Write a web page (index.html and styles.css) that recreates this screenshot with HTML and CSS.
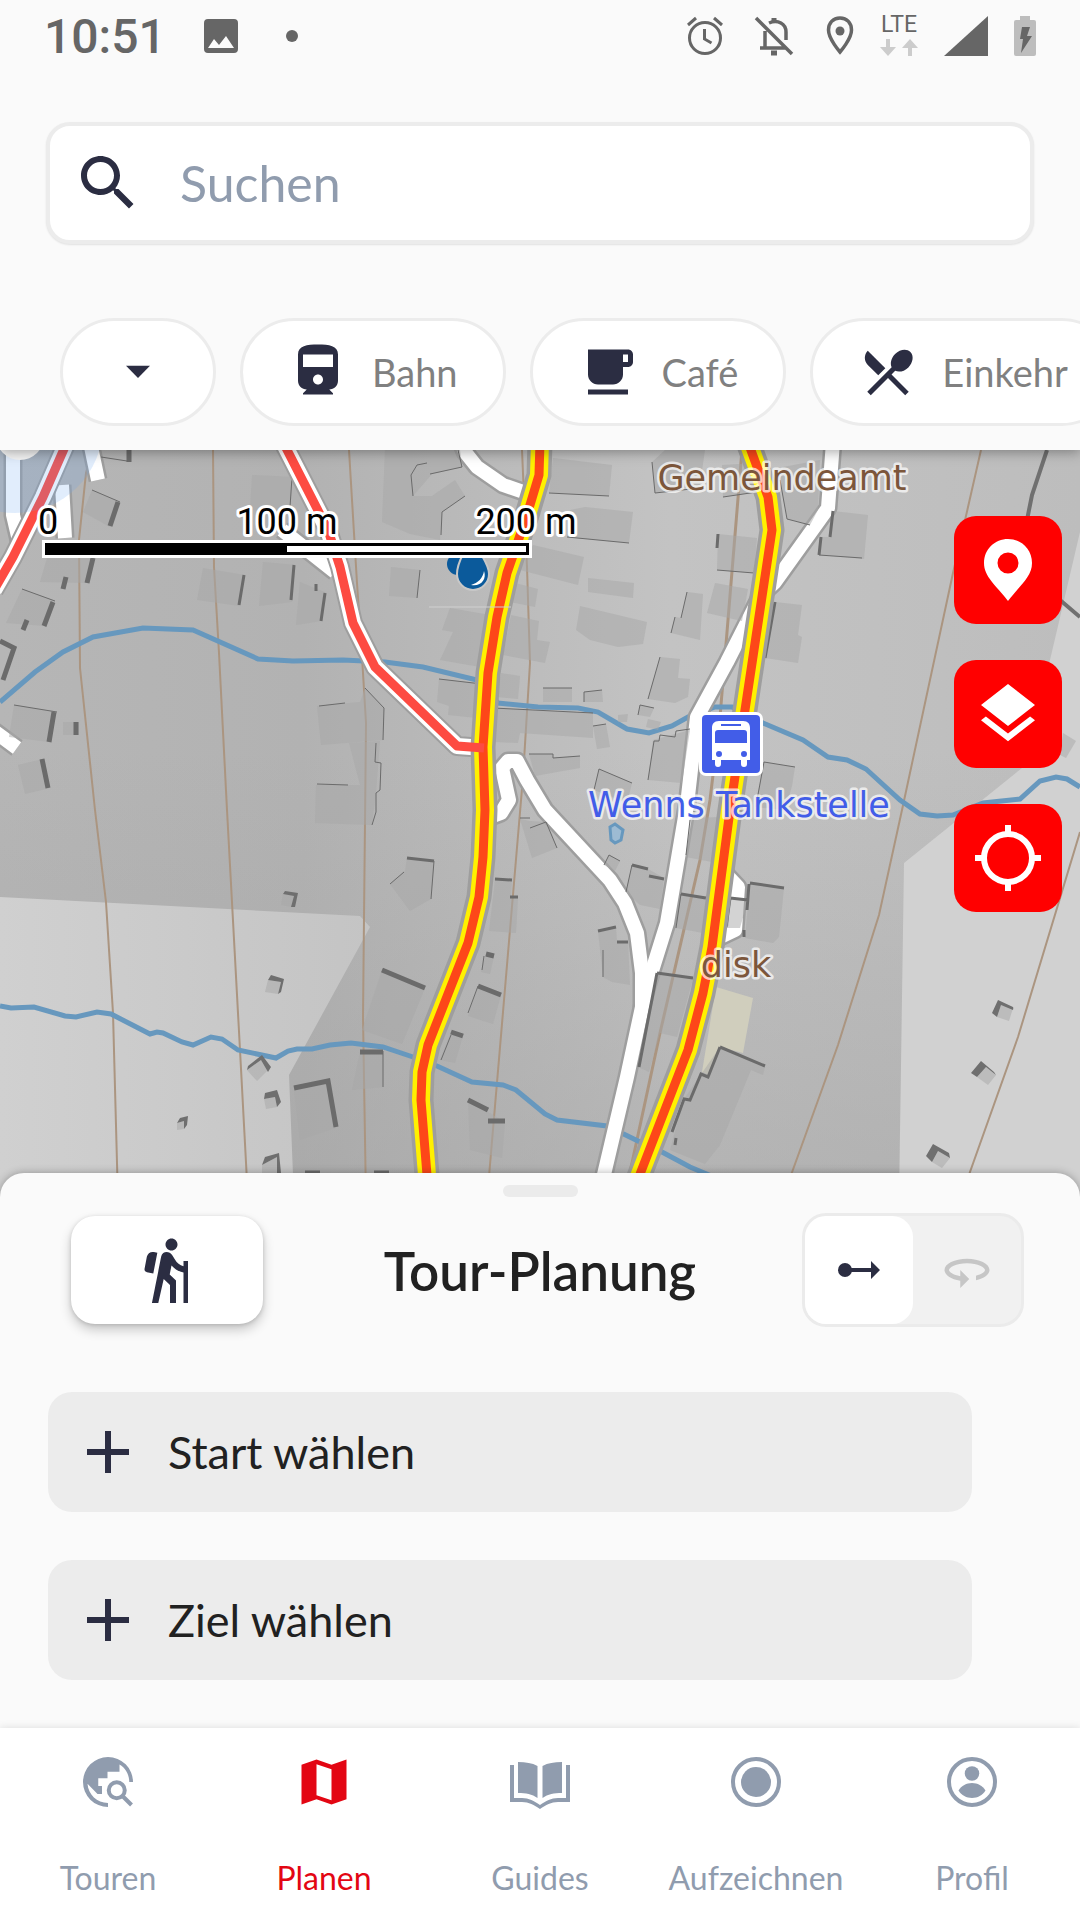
FILE: index.html
```html
<!DOCTYPE html>
<html lang="de">
<head>
    <meta charset="UTF-8">
    <meta name="viewport" content="width=device-width, initial-scale=1.0">
    <title>Tour-Planung</title>
    <link rel="stylesheet" href="styles.css">
</head>
<body>
    <header class="top">
        <div class="status-bar">
            <time class="clock">10:51</time>
            <svg class="status-photo" width="34" height="34" viewBox="0 0 34 34"><path fill-rule="evenodd" d="M4 0h26a4 4 0 0 1 4 4v26a4 4 0 0 1-4 4H4a4 4 0 0 1-4-4V4a4 4 0 0 1 4-4zM4 29h26L22 17l-7 9-5-6z"/></svg>
            <span class="status-dot"></span>
            <div class="status-icons">
                <svg width="42" height="40" viewBox="0 0 42 40" fill="none" stroke="currentColor" stroke-width="3"><circle cx="19" cy="22" r="15.5"/><path d="M18.5 13v10l7 4M2 9l8-7M36 9l-8-7"/></svg>
                <svg width="40" height="40" viewBox="0 0 40 40" fill="none" stroke="currentColor" stroke-width="3.5"><path d="M2 2l36 36M6 32h26M11 31V15M15 7c9-4 17 1 17 9v8"/><path d="M20 2v4M17 37h6" stroke-width="5"/></svg>
                <svg width="34" height="40" viewBox="-6 0 34 40" fill="none" stroke="currentColor" stroke-width="3.5"><path d="M14 2C7 2 2.500 7 2.500 14c0 9 11.500 22 11.500 22s11.500-13 11.500-22C25.500 7 21 2 14 2z"/><circle cx="14" cy="15" r="4.500" fill="currentColor" stroke="none"/></svg>
                <div class="network">
                    <span>LTE</span>
                    <svg width="38" height="17" viewBox="0 0 38 17"><path d="M6 0h4v8h6l-8 9-8-9h6zM28 17h4V9h6l-8-9-8 9h6z"/></svg>
                </div>
                <svg width="44" height="40" viewBox="0 0 44 40"><path d="M44 0v40H0z"/></svg>
                <svg width="22" height="40" viewBox="0 0 22 40"><path fill="#bdbdbd" d="M6 0h10v4h4a2 2 0 0 1 2 2v32a2 2 0 0 1-2 2H2a2 2 0 0 1-2-2V6a2 2 0 0 1 2-2h4z"/><path d="M8 11h8l-3 9h5L7 37l2-14H6z"/></svg>
            </div>
        </div>

        <form class="search" role="search">
            <svg width="72" height="72" viewBox="0 0 24 24"><path d="M15.500 14h-.79l-.28-.27C15.410 12.590 16 11.110 16 9.500 16 5.910 13.090 3 9.500 3S3 5.910 3 9.500 5.910 16 9.500 16c1.610 0 3.090-.59 4.230-1.570l.27.28v.79l5 4.990L20.490 19l-4.990-5zm-6 0C7.010 14 5 11.990 5 9.500S7.010 5 9.500 5 14 7.010 14 9.500 11.990 14 9.500 14z"/></svg>
            <input type="search" placeholder="Suchen" aria-label="Suchen">
        </form>

        <div class="chips">
            <button class="chip chip-more" aria-label="Kategorien"><svg width="60" height="60" viewBox="0 0 24 24"><path d="M7.200 9.500h9.600L12 14.400z"/></svg></button>
            <button class="chip"><svg width="60" height="60" viewBox="0 0 24 24"><path d="M4 15.500C4 17.430 5.570 19 7.500 19L6 20.500v.5h12v-.5L16.500 19c1.930 0 3.500-1.570 3.500-3.500V5c0-3.500-3.580-4-8-4s-8 .5-8 4v10.500zm8 1.500c-1.100 0-2-.9-2-2s.9-2 2-2 2 .9 2 2-.9 2-2 2zm6-7H6V5h12v5z"/></svg>Bahn</button>
            <button class="chip"><svg width="60" height="60" viewBox="0 0 24 24"><path d="M20 3H4v10c0 2.210 1.790 4 4 4h6c2.210 0 4-1.790 4-4v-3h2c1.110 0 2-.9 2-2V5c0-1.110-.89-2-2-2zm0 5h-2V5h2v3zM4 19h16v2H4z"/></svg>Café</button>
            <button class="chip"><svg width="60" height="60" viewBox="0 0 24 24"><path d="M8.100 13.340l2.830-2.830L3.910 3.500c-1.560 1.560-1.560 4.090 0 5.660l4.190 4.180zm6.780-1.810c1.530.71 3.680.21 5.270-1.380 1.910-1.910 2.280-4.650.81-6.120-1.460-1.460-4.200-1.100-6.120.81-1.590 1.590-2.090 3.740-1.380 5.270L3.700 19.870l1.410 1.410L12 14.410l6.880 6.880 1.410-1.410L13.410 13l1.470-1.470z"/></svg>Einkehr</button>
        </div>
    </header>

    <main class="map">
        <svg class="map-canvas" viewBox="0 0 1080 750" preserveAspectRatio="xMidYMin slice" role="img" aria-label="Karte von Wenns">
            <defs>
                <linearGradient id="ground" x1="0" y1="0" x2="1" y2="0">
                    <stop offset="0" stop-color="#b6b6b6"/>
                    <stop offset=".28" stop-color="#b2b2b2"/>
                    <stop offset=".62" stop-color="#c3c3c3"/>
                    <stop offset="1" stop-color="#bdbdbd"/>
                </linearGradient>
                <linearGradient id="shade" x1="0" y1="0" x2="0" y2="1">
                    <stop offset=".4" stop-color="#a0a0a0" stop-opacity="0"/>
                    <stop offset="1" stop-color="#a0a0a0" stop-opacity=".45"/>
                </linearGradient>
                <linearGradient id="slope" x1="0" y1="0" x2="1" y2="0">
                    <stop offset="0" stop-color="#d0d0d0"/>
                    <stop offset="1" stop-color="#c4c4c4"/>
                </linearGradient>
            </defs>

            <!-- hill shading -->
            <path fill="url(#ground)" d="M0 0h1080v750H0z"/>
            <path fill="url(#shade)" d="M0 0h1080v750H0z"/>
            <path fill="url(#slope)" d="M0 447L360 466L370 477L289 625L294 750H0z"/>
            <path fill="#d1d1d1" d="M1080 82L1050 210L1022 318L904 413L899 750H1080z"/>
            <path fill="#d0cebd" d="M716 537L753 548L743 603L720 597L709 625L702 622z"/>

            <!-- contour lines -->
            <g class="contour">
                <path d="M92 0L86 23L79 90L80 218L95 360L106 452L113 563L118 750"/>
                <path d="M213 0L214 117L219 203L227 360L240 600L248 750"/>
                <path d="M349 0L357 133L363 223L366 273L363 567L366 750"/>
                <path d="M522 0L527 117L530 213L523 327L487 750"/>
                <path d="M742 0L720 267L710 350L700 410L660 583L624 750" stroke-width="3"/>
                <path d="M981 0L953 123L902 360L879 465L838 595L782 750"/>
                <path d="M1080 382L1018 587L960 750"/>
            </g>

            <!-- streams -->
            <g class="stream">
                <path d="M0 252L35 222L63 202L93 187L143 178L193 180L258 209L293 211L343 210L385 212L423 217L477 230L498 253L538 257L578 258L598 262L627 279L649 283L672 276L688 267L715 257L732 257L763 273L803 290L828 307L847 310L866 319L900 350L920 364L937 366L953 365L983 353L1020 349L1040 331L1056 327L1067 329L1080 337"/>
                <path d="M0 556L11 558L34 557L65 566L76 567L97 562L111 564L150 584L157 582L163 583L182 592L193 595L211 587L222 589L238 600L276 608L288 601L297 599L312 599L330 595L351 593L383 597L413 607L437 616L472 632L503 635L516 640L545 664L557 670L607 676L638 691L662 702L690 717L740 738"/>
                <path d="M610 377L615 374L623 380L621 390L615 393L611 390z" fill="#9dbbd3" stroke-width="3"/>
            </g>

            <!-- small roads -->
            <g class="road road-case">
                <path d="M461 -8L465 2L477 17L503 35L535 46"/>
                <path d="M833 -8L828 58L775 132L761 145L727 212L697 267L687 355L667 473L647 537L642 557L627 627L598 750"/>
                <path d="M493 366L501 363L509 350L502 318L508 311H517L527 330L545 360L610 430L625 453L637 483L642 523L642 557"/>
                <path d="M13 -8V65L20 95M90 -8L98 30M62 35L65 88M282 80L335 122M-6 281L17 298M722 420L738 437L735 480L712 491"/>
            </g>
            <g class="road road-white">
                <path d="M461 -8L465 2L477 17L503 35L535 46"/>
                <path d="M833 -8L828 58L775 132L761 145L727 212L697 267L687 355L667 473L647 537L642 557L627 627L598 750"/>
                <path d="M493 366L501 363L509 350L502 318L508 311H517L527 330L545 360L610 430L625 453L637 483L642 523L642 557"/>
                <path d="M13 -8V65L20 95M90 -8L98 30M62 35L65 88M282 80L335 122M-6 281L17 298M722 420L738 437L735 480L712 491"/>
            </g>
            <path fill="none" stroke="#707070" stroke-width="4" d="M1047 0L1032 45L1027 70M1060 150L1080 167"/>

            <!-- buildings -->
            <path class="house" d="M92 40L120 52L110 77L83 62zM47 108L95 108L87 133L40 132zM22 139L55 151L45 176L6 173zM14 255L57 262L49 292L9 287zM63 272H79V285H63zM18 315L43 309L50 338L25 344zM252 25L293 27L290 60L250 60zM203 118L245 125L239 156L197 150zM263 112L295 115L292 152L259 156zM300 132L327 143L321 171L296 175zM317 256L360 252L365 238L384 258L383 290L321 295zM316 335H360L349 293L380 291L376 343L372 375L315 373z"/>
            <path class="house" d="M385 0H460L462 17L432 24L413 46H432L455 30L465 46L442 62L440 90L410 84L382 72zM391 117L420 120L417 148L389 146zM450 158L490 165L480 217L440 210L453 182L442 180zM439 229L482 234L477 268L448 265L449 256L437 252zM553 8L612 15L609 46L549 43zM585 57L633 62L629 93L567 87L570 60zM533 95L584 107L578 135L520 120zM588 128L634 133L633 148L588 142zM580 156L647 172L643 194L618 197L590 190L576 180zM515 133L538 139L535 157L510 152zM511 165L539 171L537 190L550 192L545 213L503 205zM501 223L520 226L518 249L497 247z"/>
            <path class="house" d="M543 238H572V252H543zM584 242L602 240L603 252H584zM687 142L703 144L700 190L671 183L675 167L681 168zM660 207L680 209L678 228L690 229L688 247L675 253L648 249zM640 255L654 258L650 267L638 265zM648 269L661 272L658 280L646 277zM618 265L628 264L627 272H618zM493 258L593 263V288L520 283L518 293L495 292zM593 276L606 274L610 297L597 299zM529 304H553V308L580 306V318L557 322L535 326zM599 319L632 333L627 353L594 340zM653 290L690 280L682 333L648 330zM652 12L665 0H705L700 35L655 43zM722 15L758 13L757 42L723 47z"/>
            <path class="house" d="M780 30L787 69L810 75L818 60L820 10L783 17zM833 61L868 65L864 109L819 105L820 87H830zM718 84L757 88L754 123L717 120zM715 133L748 139L742 171L707 163zM775 152L802 155L798 185L802 187L798 213L765 208zM764 312L795 317L792 336L785 360L755 357zM750 433L784 438L779 487L773 493L745 488zM730 448L748 450L740 478H726zM520 369L530 371L547 372L557 398L532 408zM407 408L434 411L431 449L410 461L390 434L405 421zM495 430L512 431L511 447L518 448L516 483L489 481zM486 504L494 506L490 524L481 522zM478 536L501 545L493 574L468 566zM451 582L463 586L455 613L440 610z"/>
            <path class="house" d="M382 520L425 538L402 594L362 580zM360 602H383V637L352 640zM468 651L488 662L505 672L502 708L470 700zM609 405L620 411L615 421L604 415zM632 415L648 419L664 428L660 459L640 455L626 442zM681 444L706 448L703 483L676 478zM690 368L720 367L712 412L686 407zM598 481L616 477L617 492H628L630 535L612 532L603 527zM657 523L693 529L677 587L660 583L649 622L638 617zM720 597L765 616L763 625L751 620L720 695L705 714L670 700L684 649zM294 639L328 632L336 678L300 690z"/>
            <path class="house" d="M283 444L294 446L291 457L281 455zM268 530L281 532L278 544L265 542zM247 620L261 610L268 620L257 631zM264 649L275 647L277 657L266 659zM177 673L184 671V679L177 680zM262 715L277 707V723H262zM1001 555L1013 558L1009 571L997 567zM986 617L996 625L988 635L977 627zM938 701L950 708L942 718L932 712zM1063 283L1076 291L1066 308L1060 305z"/>
            <path class="wall" d="M92 40L120 52M101 7L127 11M22 139L55 151M14 255L57 262M292 27L290 57M317 334L348 335M319 256L345 253M365 238L384 258L383 290M376 293L375 312L381 313L380 340L376 343V362L372 375M458 0L462 17L430 24M427 13L417 15L411 25L413 46M465 46L442 62L441 85M420 120L417 148M439 229L482 234M549 43L609 46M567 87L629 93M543 238H572M584 252V242L602 240M687 142L681 168M675 167L671 183M660 207L648 249M638 265L640 255L654 258M493 258L593 263M529 304H553V308L580 306M594 340L599 319L632 333M690 279L676 281L675 287L660 285L659 291H654L648 330M652 12L655 43L700 38M723 47L757 42M780 30L787 69L810 75M819 105L862 108M717 120L754 123M795 317L764 312L757 350M530 378L546 372L557 398M434 411L431 449M390 434L404 422M604 415L609 405L620 411M632 415L626 442M681 444L676 478M690 370L686 405M383 601V637M603 500V527M484 506L482 520M478 536L468 563M451 585L441 610M593 276L606 274M520 368H530"/>
            <path class="wall wall-mid" d="M244 125L239 155M294 115L291 150M325 143L321 171M316 134V141M833 61L830 87M821 87L819 105M775 152L765 208M718 84L717 98M750 433L784 438M749 434L747 460M744 480V487M730 448L748 450M730 448L726 477M407 408L434 411M495 429L512 430M510 447H518M632 415L648 419M649 426L664 429M681 444L706 448M598 481L616 477M617 492H628M657 523L693 528M657 523L639 617M720 597L765 616M720 597L708 627L701 624L690 650L684 649L672 682M305 722H320M374 722H389M676 688L675 695"/>
            <path class="wall wall-thick" d="M118 52L110 76M129 0V12M93 108L87 133M66 127L63 139M53 152L44 176M27 170L23 180M0 191L14 198L3 230M54 262L49 292M76 272V285M42 309L48 338M382 520L425 538M360 602H383M468 650L488 660M488 671H505M486 504L494 506M478 536L501 545M451 582L463 586M294 638L328 631L336 677"/>
            <path class="wall-fill" d="M283 444L285 441L298 443L295 457L291 457L294 446zM268 530L271 525L284 529L281 542L278 544L281 532zM247 620L248 616L262 605L271 617L268 622L261 610zM264 649L265 643L277 640L281 652L277 657L275 647zM177 673L180 668L188 666L187 675L184 679V671zM262 715L265 707L279 703L281 723H277V707zM1013 558L1014 560L1013 557L998 550L992 563L997 567L1001 555L1013 560zM996 625L994 622L981 611L971 623L977 627L986 617zM950 708L949 703L933 694L926 706L932 712L938 701z"/>

            <!-- main roads -->
            <g class="road">
                <path class="path-case" d="M67 -8L43 47L13 107L-6 140M283 -8L328 80L340 117L353 173L375 217L457 296L484 298"/>
                <path class="path-edge" d="M67 -8L43 47L13 107L-6 140M283 -8L328 80L340 117L353 173L375 217L457 296L484 298"/>
                <path class="main-case" d="M540 -8L539 25L527 65L507 123L497 167L488 223L483 297L485 360L483 407L479 447L468 493L428 595L422 622L421 650L429 750M748 -8L768 47L772 80L745 260L730 360L712 497L703 543L688 600L630 750"/>
                <path class="main-edge" d="M540 -8L539 25L527 65L507 123L497 167L488 223L483 297L485 360L483 407L479 447L468 493L428 595L422 622L421 650L429 750M748 -8L768 47L772 80L745 260L730 360L712 497L703 543L688 600L630 750"/>
                <path class="main-line" d="M540 -8L539 25L527 65L507 123L497 167L488 223L483 297L485 360L483 407L479 447L468 493L428 595L422 622L421 650L429 750M748 -8L768 47L772 80L745 260L730 360L712 497L703 543L688 600L630 750"/>
                <path class="path-line" d="M67 -8L43 47L13 107L-6 140M283 -8L328 80L340 117L353 173L375 217L457 296L484 298"/>
            </g>
            <path stroke="#d0d0d0" d="M429 157H511"/>

            <!-- own position -->
            <circle cx="15" cy="-25" r="88" fill="#6aa5ee" fill-opacity=".2"/>
            <circle cx="20" cy="-14" r="24" fill="#f5f5f5"/>

            <!-- fountain -->
            <g fill="#0b5a9b">
                <circle cx="458" cy="114" r="11"/>
                <path stroke="#c8c8c8" stroke-width="2" d="M463 104h18c4 7 8 13 8 20a16 16 0 0 1-32 0c0-8 3-14 6-20z"/>
                <path fill="#fff" d="M484 121c3 8-3 16-13 14 7-2 12-7 13-14z"/>
            </g>

            <!-- bus stop -->
            <g>
                <rect x="699" y="262" width="64" height="64" rx="7" fill="#fff"/>
                <rect x="702" y="265" width="58" height="58" rx="4" fill="#425de8"/>
                <path fill="#fff" fill-rule="evenodd" d="M719 271h24c5 0 7 3 7 7v32h-3v4a3 3 0 0 1-6 0v-4h-20v4a3 3 0 0 1-6 0v-4h-3v-32c0-4 2-7 7-7zm-1 9a3 3 0 0 0-3 3v10h32v-10a3 3 0 0 0-3-3zm1 21a3 3 0 1 0 0 6 3 3 0 0 0 0-6zm25 0a3 3 0 1 0 0 6 3 3 0 0 0 0-6z"/>
                <path stroke="#425de8" stroke-width="2" d="M721 275h20"/>
            </g>

            <g class="place">
                <text x="782" y="40">Gemeindeamt</text>
                <text x="736" y="527">disk</text>
                <text x="739" y="367" class="stop">Wenns Tankstelle</text>
            </g>

            <!-- scale -->
            <path fill="#fff" d="M42 90h490v18H42z"/>
            <path fill="#000" d="M45 93h484v12H45z"/>
            <path fill="#fff" d="M287 96h239v6H287z"/>
            <g class="scale-label">
                <text x="48" y="84">0</text>
                <text x="287" y="84">100 m</text>
                <text x="526" y="84">200 m</text>
            </g>
        </svg>

        <div class="map-actions">
            <button aria-label="Ort"><svg width="48" height="62" viewBox="0 0 48 62"><path fill-rule="evenodd" d="M24 0C11 0 0 10 0 24c0 14 12 22 24 38 12-16 24-24 24-38C48 10 37 0 24 0zm0 13.500a10.500 10.500 0 1 1 0 21 10.500 10.500 0 0 1 0-21z"/></svg></button>
            <button aria-label="Ebenen"><svg width="72" height="72" viewBox="0 0 24 24"><path d="M11.990 18.540l-7.370-5.730L3 14.070l9 7 9-7-1.630-1.270-7.380 5.740zM12 16l7.360-5.730L21 9l-9-7-9 7 1.630 1.270L12 16z"/></svg></button>
            <button aria-label="Standort"><svg width="72" height="72" viewBox="0 0 24 24" fill="none" stroke="currentColor" stroke-width="2"><circle cx="12" cy="12" r="8"/><path d="M12 1v3M12 20v3M1 12h3M20 12h3"/></svg></button>
        </div>
    </main>

    <section class="sheet">
        <div class="handle"></div>
        <div class="sheet-head">
            <button class="activity" aria-label="Wandern"><svg width="72" height="72" viewBox="0 0 24 24"><path d="M13.500 5.500c1.100 0 2-.9 2-2s-.9-2-2-2-2 .9-2 2 .9 2 2 2zM17.500 10.780c-1.230-.37-2.220-1.170-2.800-2.180l-1-1.600c-.41-.65-1.110-1-1.840-1-.78 0-1.590.5-1.780 1.440S7 23 7 23h2.100l1.800-8 2.100 2v6h2v-7.500l-2.100-2 .6-3c1 1.150 2.410 2.010 4 2.340V23H19V9h-1.500v1.780zM7.430 13.130l-2.120-.41c-.54-.11-.9-.63-.79-1.170l.76-3.930c.21-1.080 1.260-1.790 2.340-1.580l1.160.23-1.350 6.860z"/></svg></button>
            <h1>Tour-Planung</h1>
            <div class="route-mode">
                <button class="active" aria-label="Strecke" aria-pressed="true"><svg width="42" height="18" viewBox="0 0 42 18"><circle cx="7" cy="9" r="7"/><path d="M7 7h26V0l9 9-9 9v-7H7z"/></svg></button>
                <button aria-label="Rundtour" aria-pressed="false"><svg width="54" height="54" viewBox="0 0 24 24"><path d="M12 7C6.480 7 2 9.240 2 12c0 2.240 2.940 4.130 7 4.770V20l4-4-4-4v2.730c-3.150-.56-5-1.900-5-2.730 0-1.060 3.040-3 8-3s8 1.940 8 3c0 .73-1.460 1.890-4 2.530v2.050c3.530-.77 6-2.530 6-4.580 0-2.760-4.480-5-10-5z"/></svg></button>
            </div>
        </div>
        <div class="waypoints">
            <button class="waypoint"><svg width="72" height="72" viewBox="0 0 24 24"><path d="M19 13h-6v6h-2v-6H5v-2h6V5h2v6h6z"/></svg>Start wählen</button>
            <button class="waypoint"><svg width="72" height="72" viewBox="0 0 24 24"><path d="M19 13h-6v6h-2v-6H5v-2h6V5h2v6h6z"/></svg>Ziel wählen</button>
        </div>
    </section>

    <nav class="tabs">
        <a href="#touren"><svg width="60" height="60" viewBox="0 0 24 24"><path d="M12 20.400V22A10 10 0 1 1 22 12h-1.500c0-3-1.500-5.600-3.900-7v2.900h-4.800v2.600H8.100v3.100h1.500v3.200H7.800l-4-4.100c.3 4.300 3.800 7.700 8.200 7.700z"/><circle cx="15.500" cy="15.300" r="3.200" fill="none" stroke="currentColor" stroke-width="1.600"/><path fill="none" stroke="currentColor" stroke-width="1.600" d="M17.700 17.500l3.700 3.700"/></svg>Touren</a>
        <a href="#planen" class="active" aria-current="page"><svg width="60" height="60" viewBox="0 0 24 24"><path fill-rule="evenodd" d="M3 5.100L9 3l6 2.100L21 3v15.900L15 21l-6-2.100L3 21zM9 4.900v12.400l6 2V6.900z"/></svg>Planen</a>
        <a href="#guides"><svg width="60" height="60" viewBox="0 0 60 60"><path d="M8 10c8 0 14 1 19.500 4v32C22 42 16 41 8 41zM52 10c-8 0-14 1-19.500 4v32C38 42 44 41 52 41zM0 13h4v33h8c7 0 12 3 18 7 6-4 11-7 18-7h8V13h4v37H48c-7 0-12 3-18 7-6-4-11-7-18-7H0z"/></svg>Guides</a>
        <a href="#aufzeichnen"><svg width="60" height="60" viewBox="0 0 24 24"><circle cx="12" cy="12" r="9.200" fill="none" stroke="currentColor" stroke-width="1.600"/><circle cx="12" cy="12" r="6"/></svg>Aufzeichnen</a>
        <a href="#profil"><svg width="60" height="60" viewBox="0 0 24 24"><circle cx="12" cy="12" r="9.200" fill="none" stroke="currentColor" stroke-width="1.600"/><circle cx="12" cy="8.600" r="2.900"/><path d="M6.600 15.400c1.200-1.900 3.200-3 5.400-3s4.200 1.100 5.400 3c-1.200 1.900-3.200 3-5.400 3s-4.200-1.100-5.400-3z"/></svg>Profil</a>
    </nav>
</body>
</html>
```
FILE: styles.css
```css
* {
    box-sizing: border-box;
}

body {
    margin: 0;
    min-height: 100vh;
    display: flex;
    flex-direction: column;
    font-family: Lato, sans-serif;
    background: #fafafa;
    color: #212121;
    overflow-x: hidden;
}

button {
    border: none;
    padding: 0;
    font: inherit;
    color: inherit;
    cursor: pointer;
}

svg {
    display: block;
    flex: none;
    fill: currentColor;
}

svg[fill="none"] {
    fill: none;
}

/* header */
.top {
    position: relative;
    z-index: 1;
    background: #fafafa;
    padding-bottom: 24px;
    box-shadow: 0 2px 12px rgba(0, 0, 0, 0.35);
}

.status-bar {
    display: flex;
    align-items: center;
    height: 72px;
    padding: 0 44px;
    color: #666;
    font-family: Roboto, sans-serif;
}

.clock {
    font-size: 48px;
    font-weight: 500;
}

.status-photo {
    margin-left: 38px;
}

.status-dot {
    width: 12px;
    height: 12px;
    margin-left: 48px;
    border-radius: 50%;
    background: #666;
}

.status-icons {
    margin-left: auto;
    display: flex;
    align-items: center;
    gap: 26px;
}

.network {
    display: flex;
    flex-direction: column;
    align-items: center;
    gap: 5px;
    font-size: 23px;
    line-height: 18px;
}

.network svg {
    fill: #ccc;
}

.search {
    display: flex;
    align-items: center;
    gap: 36px;
    height: 122px;
    margin: 50px 46px 0;
    padding: 0 22px;
    background: #fff;
    border: 4px solid #ececec;
    border-radius: 24px;
    color: #2b2d42;
    box-shadow: 0 1px 2px rgba(0, 0, 0, 0.1);
}

.search input {
    flex: 1;
    min-width: 0;
    border: none;
    outline: none;
    padding: 0;
    background: none;
    font: inherit;
    font-size: 50px;
}

.search input::placeholder {
    color: #909cae;
}

.chips {
    display: flex;
    gap: 24px;
    margin-top: 74px;
    padding-left: 60px;
    overflow: hidden;
}

.chip {
    display: flex;
    flex: none;
    align-items: center;
    gap: 24px;
    height: 108px;
    padding: 0 45px;
    background: #fff;
    border: 3px solid #ececec;
    border-radius: 54px;
    color: #808080;
    font-size: 38px;
}

.chip svg {
    fill: #2b2d42;
}

/* map */
.map {
    position: relative;
    flex: 1;
    min-height: 560px;
}

.map-canvas {
    position: absolute;
    top: 0;
    left: 0;
    width: 100%;
    height: calc(100% + 27px);
}

.contour {
    fill: none;
    stroke: #ab9580;
    stroke-width: 2;
}

.stream {
    fill: none;
    stroke: #6798be;
    stroke-width: 5;
}

.road {
    fill: none;
    stroke-linejoin: round;
}

.road-case {
    stroke: #9e9e9e;
    stroke-width: 19;
}

.road-white {
    stroke: #fff;
    stroke-width: 14;
}

.path-case {
    stroke: #9e9e9e;
    stroke-width: 20;
}

.path-edge {
    stroke: #fff;
    stroke-width: 16;
}

.path-line {
    stroke: #fd4b42;
    stroke-width: 9;
}

.main-case {
    stroke: #9e9e9e;
    stroke-width: 25;
}

.main-edge {
    stroke: #fff000;
    stroke-width: 18;
}

.main-line {
    stroke: #fd4719;
    stroke-width: 9;
}

.house {
    fill: #a8a8a8;
    fill-opacity: 0.5;
}

.wall {
    fill: none;
    stroke: #6b6b6b;
    stroke-width: 1;
}

.wall-mid {
    stroke-width: 3;
}

.wall-thick {
    stroke-width: 5;
}

.wall-fill {
    fill: #6f6f6f;
}

.place {
    font-family: "DejaVu Sans", sans-serif;
    font-size: 35px;
    text-anchor: middle;
    fill: #7c563b;
    stroke: #fff;
    stroke-opacity: 0.7;
    stroke-width: 5;
    stroke-linejoin: round;
    paint-order: stroke;
}

.stop {
    fill: #425de8;
}

.scale-label {
    font-family: Roboto, sans-serif;
    font-size: 36px;
    text-anchor: middle;
    fill: #000;
    stroke: #fff;
    stroke-width: 6;
    stroke-linejoin: round;
    paint-order: stroke;
}

.map-actions {
    position: absolute;
    top: 66px;
    right: 18px;
    display: flex;
    flex-direction: column;
    gap: 36px;
}

.map-actions button {
    display: flex;
    align-items: center;
    justify-content: center;
    width: 108px;
    height: 108px;
    background: #f00;
    border-radius: 22px;
    color: #fff;
}

/* planning sheet */
.sheet {
    position: relative;
    background: #fafafa;
    border-radius: 24px 24px 0 0;
    padding: 12px 48px 48px;
    box-shadow: 0 0 8px rgba(0, 0, 0, 0.3);
}

.handle {
    width: 75px;
    height: 12px;
    margin: 0 auto;
    border-radius: 6px;
    background: #ebebeb;
}

.sheet-head {
    display: grid;
    grid-template-columns: 1fr auto 1fr;
    align-items: center;
    margin-top: 16px;
    padding: 0 8px;
}

.sheet-head h1 {
    margin: 0;
    font-size: 53px;
    font-weight: 600;
}

.activity {
    display: flex;
    align-items: center;
    justify-content: center;
    width: 192px;
    height: 108px;
    margin-left: 15px;
    background: #fff;
    border-radius: 24px;
    color: #2b2d42;
    box-shadow: 0 6px 12px rgba(0, 0, 0, 0.2), 0 1px 4px rgba(0, 0, 0, 0.15);
}

.route-mode {
    justify-self: end;
    display: flex;
    border: 3px solid #ebebeb;
    border-radius: 24px;
    background: #f1f1f1;
}

.route-mode button {
    display: flex;
    align-items: center;
    justify-content: center;
    width: 108px;
    height: 108px;
    border-radius: 21px;
    background: none;
    color: #c6c6c6;
}

.route-mode .active {
    background: #fff;
    color: #2b2d42;
}

.waypoints {
    display: flex;
    flex-direction: column;
    gap: 48px;
    margin: 65px 60px 0 0;
}

.waypoint {
    display: flex;
    align-items: center;
    gap: 24px;
    height: 120px;
    padding: 0 24px;
    background: #ececec;
    border-radius: 24px;
    font-size: 45px;
}

.waypoint svg {
    fill: #2b2d42;
}

/* bottom tabs */
.tabs {
    position: relative;
    display: grid;
    grid-template-columns: repeat(5, 1fr);
    padding: 24px 0 22px;
    background: #fff;
    box-shadow: 0 0 8px rgba(0, 0, 0, 0.12);
}

.tabs a {
    display: flex;
    flex-direction: column;
    align-items: center;
    gap: 46px;
    color: #909cae;
    font-size: 32px;
    line-height: 40px;
    text-decoration: none;
}

.tabs .active {
    color: #e30613;
}
```
